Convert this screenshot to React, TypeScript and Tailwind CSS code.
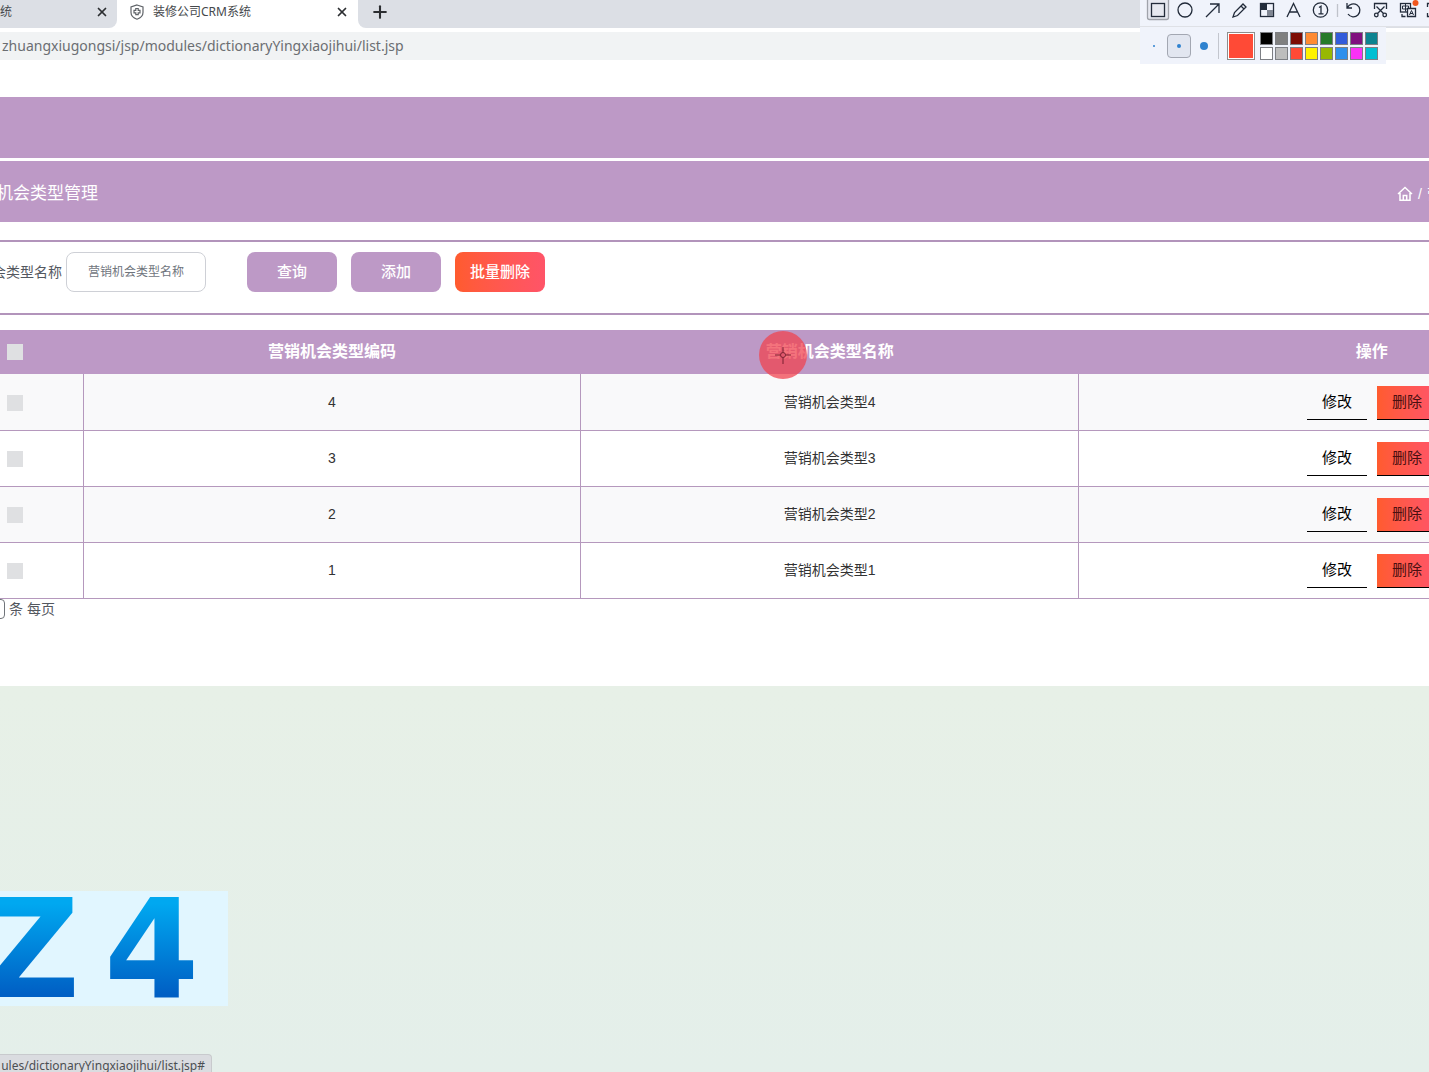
import React from 'react';
import { Plus, X } from 'lucide-react';

const rows = [
  { code: '4', name: '营销机会类型4' },
  { code: '3', name: '营销机会类型3' },
  { code: '2', name: '营销机会类型2' },
  { code: '1', name: '营销机会类型1' },
];

const swatches = [
  'bg-black',
  'bg-[#808080]',
  'bg-[#7d0c04]',
  'bg-[#ff8b33]',
  'bg-[#267a29]',
  'bg-[#325bdb]',
  'bg-[#80107f]',
  'bg-[#0c8390]',
  'bg-white',
  'bg-[#bdbdbd]',
  'bg-[#ff4a36]',
  'bg-[#fff200]',
  'bg-[#98b802]',
  'bg-[#2e8fec]',
  'bg-[#fb32f5]',
  'bg-[#00bfd2]',
];

const ShieldIcon: React.FC = () => (
  <svg viewBox="0 0 16 16" className="h-4 w-4 shrink-0" fill="none" stroke="#5f6368" strokeWidth="1.2">
    <path d="M8 1 L14 3 V8.5 C14 11.5 11.5 14 8 15.2 C4.500 14 2 11.5 2 8.500 V3 Z" />
    <path d="M6.800 4.500 H9.200 V6.300 H11 V8.900 H9.200 V10.700 H6.800 V8.900 H5 V6.300 H6.800 Z" />
  </svg>
);

const HomeIcon: React.FC = () => (
  <svg viewBox="0 0 16 16" className="h-4 w-4" fill="none" stroke="currentColor" strokeWidth="1.5">
    <path d="M1 8 L8 1.500 L15 8 M3 7 V14.300 H13 V7 M6.300 14 V9.500 H9.700 V14" />
  </svg>
);

const BrowserChrome: React.FC = () => (
  <header className="font-['Noto_Sans','Noto_Sans_CJK_SC',sans-serif]">
    <div className="bg-white pb-1">
      <div className="flex h-7 bg-[#dcdfe5] text-xs text-[#45484c]">
        <div className="flex w-[117px] bg-white">
          <div className="flex flex-1 items-center justify-between rounded-br-lg bg-[#dcdfe5] pr-2 pb-1">
            <span>统</span>
            <button type="button" aria-label="关闭标签页">
              <X className="h-[14px] w-[14px] text-[#2c2e31]" strokeWidth={3} />
            </button>
          </div>
        </div>
        <div className="flex w-[241px] items-center gap-2 bg-white pr-[9px] pb-1 pl-3">
          <ShieldIcon />
          <span className="flex-1">装修公司CRM系统</span>
          <button type="button" aria-label="关闭标签页">
            <X className="h-[14px] w-[14px] text-[#2c2e31]" strokeWidth={3} />
          </button>
        </div>
        <div className="flex flex-1 bg-white">
          <div className="flex flex-1 items-center rounded-bl-lg bg-[#dcdfe5] pb-1 pl-3">
            <button type="button" aria-label="新标签页">
              <Plus className="h-5 w-5 text-[#2c2e31]" strokeWidth={2.5} />
            </button>
          </div>
        </div>
      </div>
    </div>
    <div className="h-7 bg-[#f1f3f4] text-sm leading-7 whitespace-nowrap text-[#6b6e72]">
      <span className="pl-0.5">zhuangxiugongsi/jsp/modules/dictionaryYingxiaojihui/list.jsp</span>
    </div>
  </header>
);

/** Floating annotation toolbar of the screen capture tool. */
const CaptureToolbar: React.FC = () => (
  <div className="absolute top-0 right-0 w-[289px] overflow-hidden">
    <div className="h-[27px] border-b border-[#dfe1e6] bg-[#f0f3fb]">
      <svg viewBox="0 0 289 26" className="h-[26px] w-[289px]" fill="none" stroke="#222b3a" strokeWidth="1.300">
        <rect x="7.500" y="-2" width="21" height="21.500" rx="2" fill="#e6e8f0" stroke="#a0a3ab" />
        <rect x="11.500" y="3.500" width="13" height="13" />
        <circle cx="45" cy="10" r="7" />
        <path d="M66 17 L79 4 M70 4 H79 V13" />
        <path d="M93 17 L94.500 12.500 L103 4 L106 7 L97.500 15.500 Z M101 6 L104 9" />
        <rect x="120.500" y="3.500" width="13" height="13" />
        <path d="M121 4 H127 V10 H121 Z" fill="#222b3a" stroke="none" />
        <path d="M127 10 H133 V16 H127 Z" fill="#808692" stroke="none" />
        <path d="M147 17 L153.500 3.500 L160 17 M149.500 12 H157.500" />
        <circle cx="180.500" cy="10" r="7.200" />
        <path d="M179 7.500 L181 6.200 V13.500 M178.500 13.800 H183.500" />
        <path d="M197.500 4 V17" stroke="#bfc3cb" />
        <path d="M207 3 V8 H212 M207.500 7.500 A6.500 6.500 0 1 1 208 14" />
        <path d="M234.500 9 V3.500 H246.500 V9 M236.500 6.500 L243.500 13.500 M244.500 6.500 L237.500 13.500" />
        <circle cx="236.300" cy="15" r="1.800" />
        <circle cx="244.700" cy="15" r="1.800" />
        <rect x="260.500" y="3.500" width="10" height="8.500" />
        <path d="M262.500 6 H268.500 V9 H262.500 Z M265.500 4 V11.500" strokeWidth="1" />
        <path d="M267.500 8.500 H275.500 V16.500 H267.500 Z" fill="#f0f3fb" />
        <path d="M269.500 15 L271.500 10.500 L273.500 15 M270 13.500 H273" strokeWidth="1" />
        <path d="M262 14 V16.500 H265.500" />
        <circle cx="275.500" cy="3" r="3" fill="#f0561d" stroke="none" />
        <path d="M289 3.500 H287.500 V7 M287.500 13 V16.500 H289" />
      </svg>
    </div>
    <div className="flex h-[37px] w-[246px] items-center bg-[#f0f3fb] pl-[13px]">
      <span className="h-[2px] w-[2px] rounded-full bg-[#2f82cf]" />
      <button
        type="button"
        aria-label="中等线宽"
        className="ml-3 flex h-6 w-6 items-center justify-center rounded-sm border border-[#a3a7b2] bg-[#e2e6f0]"
      >
        <span className="h-1 w-1 rounded-full bg-[#2f82cf]" />
      </button>
      <span className="ml-[9px] h-2 w-2 rounded-full bg-[#2f82cf]" />
      <span className="ml-[10px] h-[26px] w-px bg-[#c3c6ce]" />
      <button
        type="button"
        aria-label="当前颜色"
        className="ml-2 h-7 w-7 border border-[#8d8d8d] bg-[#ff4a36] ring-1 ring-white ring-inset"
      />
      <div className="ml-[5px] grid grid-cols-8 gap-[2px]">
        {swatches.map((color) => (
          <button
            key={color}
            type="button"
            aria-label="颜色"
            className={`h-[13px] w-[13px] border border-[#7d7f84] ${color}`}
          />
        ))}
      </div>
    </div>
  </div>
);

const SearchBar: React.FC = () => (
  <form className="mt-[18px] flex h-[75px] border-y-2 border-[#b294bb] pt-[10px]">
    <div className="flex h-10 items-center gap-1">
      <label htmlFor="typeName" className="flex w-[62px] justify-end overflow-hidden text-sm whitespace-nowrap">
        会类型名称
      </label>
      <input
        id="typeName"
        type="text"
        placeholder="营销机会类型名称"
        className="h-10 w-[140px] rounded-lg border border-[#ced0d6] bg-white px-[21px] text-xs placeholder:text-[#6f757d]"
      />
    </div>
    <div className="ml-[41px] flex h-10 gap-[14px] text-[15px] font-medium text-white">
      <button type="button" className="w-[90px] rounded-lg bg-[#bd99c6]">
        查询
      </button>
      <button type="button" className="w-[90px] rounded-lg bg-[#bd99c6]">
        添加
      </button>
      <button type="button" className="w-[90px] rounded-lg bg-linear-to-r from-[#ff5b2e] to-[#ff5468]">
        批量删除
      </button>
    </div>
  </form>
);

const checkboxClass = 'ml-[7px] block h-4 w-4 appearance-none bg-[#dfe0e2]';

const TypeTable: React.FC = () => (
  <div className="mt-[15px] overflow-hidden">
    <table className="w-[calc(100%+236px)] table-fixed border-collapse text-center">
      <colgroup>
        <col className="w-[83px]" />
        <col className="w-[29.9%]" />
        <col className="w-[29.9%]" />
        <col />
      </colgroup>
      <thead>
        <tr className="h-[44px] bg-[#bd99c6] text-base text-white">
          <th>
            <input type="checkbox" aria-label="全选" className={checkboxClass} />
          </th>
          <th className="font-bold">营销机会类型编码</th>
          <th className="font-bold">营销机会类型名称</th>
          <th className="font-bold">操作</th>
        </tr>
      </thead>
      <tbody>
        {rows.map((row) => (
          <tr key={row.code} className="h-14 border-b border-[#b598bd] text-sm text-[#333] odd:bg-[#f9f9fa]">
            <td className="border-r border-[#b598bd] pt-0.5">
              <input type="checkbox" aria-label={row.name} className={checkboxClass} />
            </td>
            <td className="border-r border-[#b598bd]">{row.code}</td>
            <td className="border-r border-[#b598bd]">{row.name}</td>
            <td className="pt-0.5">
              <div className="flex justify-center gap-[10px] text-[15px] text-black">
                <button type="button" className="h-[34px] w-[60px] border-b border-black pb-0.5">
                  修改
                </button>
                <button
                  type="button"
                  className="h-[34px] w-[60px] border-b border-black bg-linear-to-r from-[#ff5b2e] to-[#ff5468] pb-0.5 text-[#4a1010]"
                >
                  删除
                </button>
              </div>
            </td>
          </tr>
        ))}
      </tbody>
    </table>
  </div>
);

const App: React.FC = () => (
  <div className="relative min-h-screen overflow-hidden bg-linear-to-b from-[#e7f0e7] from-65% to-[#e4efea] font-['Liberation_Sans','Noto_Sans_CJK_SC',sans-serif] text-[#54585f]">
    <BrowserChrome />

    <main className="bg-white pt-[37px] pb-[67px]">
      <div className="h-[61px] bg-[#bd99c6]" />
      <div className="mt-[3px] flex h-[61px] items-center justify-between bg-[#bd99c6] pt-1 text-white">
        <h1 className="flex w-[98px] justify-end overflow-hidden text-[17px] whitespace-nowrap">机会类型管理</h1>
        <nav className="flex w-8 items-center gap-[5px] overflow-hidden text-sm whitespace-nowrap">
          <a href="#" aria-label="首页" className="shrink-0">
            <HomeIcon />
          </a>
          <span>/</span>
          <span>营</span>
        </nav>
      </div>
      <SearchBar />
      <TypeTable />
      <div className="flex h-5 items-center gap-1 text-sm">
        <div className="flex w-[5px] justify-end overflow-hidden">
          <select aria-label="每页条数" className="h-5 w-10 shrink-0 appearance-none rounded-sm border border-[#70747a] bg-white">
            <option>10</option>
          </select>
        </div>
        <span>条 每页</span>
      </div>
    </main>

    <CaptureToolbar />

    {/* mouse click highlight */}
    <svg viewBox="0 0 48 48" className="absolute top-[331px] left-[759px] h-12 w-12" fill="none">
      <circle cx="24" cy="24" r="24" fill="#f04450" fillOpacity="0.75" />
      <circle cx="24" cy="24" r="2.500" stroke="#7a2030" />
      <path d="M24 16 V21 M24 27 V33 M16 24 H21 M27 24 H32" stroke="#7a2030" />
    </svg>

    {/* channel watermark */}
    <div className="absolute bottom-[66px] left-0 h-[115px] w-[228px] overflow-hidden bg-[#e1f6ff] pt-px">
      <div className="flex h-full items-center gap-6 bg-linear-to-b from-[#00a8f0] from-10% to-[#005fc4] to-90% bg-clip-text font-['DejaVu_Sans',sans-serif] text-[137px] leading-none font-bold text-transparent">
        <span className="flex w-20 justify-end">Z</span>
        <span>4</span>
      </div>
    </div>

    <div className="absolute bottom-0 left-0 flex h-[18px] w-[212px] justify-end overflow-hidden rounded-tr-sm border-t border-r border-[#c8cacd] bg-[#dadce0] pr-[6px] font-['Noto_Sans',sans-serif] text-xs leading-[22px] whitespace-nowrap text-[#4c4f53]">
      ules/dictionaryYingxiaojihui/list.jsp#
    </div>
  </div>
);

export default App;
